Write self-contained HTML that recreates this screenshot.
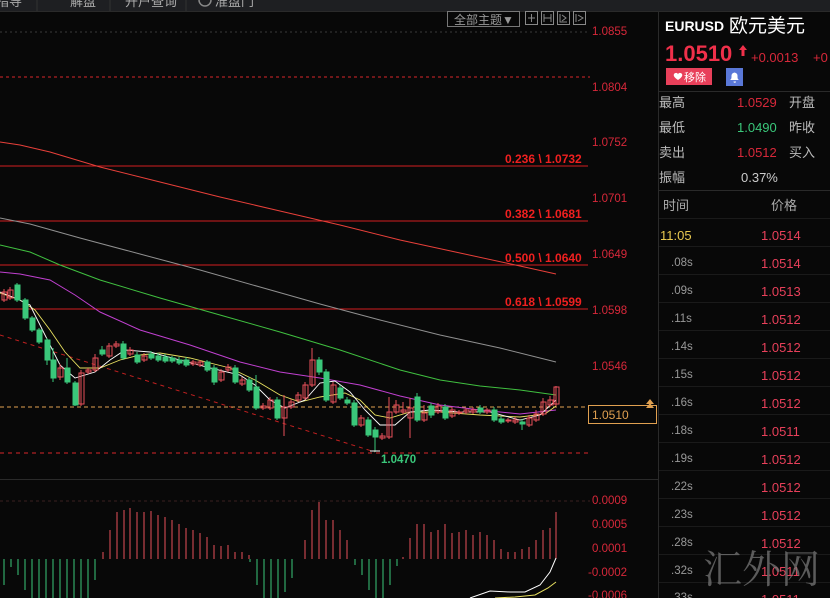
<!DOCTYPE html>
<html><head><meta charset="utf-8"><style>
body{margin:0;width:830px;height:598px;overflow:hidden;background:#080808;font-family:"Liberation Sans","Noto Sans CJK SC",sans-serif}
svg{position:absolute;left:0;top:0}
</style></head><body>
<svg width="830" height="598" xmlns="http://www.w3.org/2000/svg" font-family="Liberation Sans, Noto Sans CJK SC, sans-serif">
<rect width="830" height="598" fill="#080808"/>
<rect width="830" height="11" fill="#1e1f22"/>
<rect x="0" y="11" width="830" height="1" fill="#2a2a2a"/>
<g fill="#aaa" font-size="13"><text x="-4" y="6">指导</text><text x="70" y="6">解盘</text><text x="125" y="6">开户查询</text><text x="215" y="6">准盘门</text></g>
<g stroke="#333"><line x1="37" y1="0" x2="37" y2="11"/><line x1="110" y1="0" x2="110" y2="11"/><line x1="186" y1="0" x2="186" y2="11"/></g>
<circle cx="205" cy="0" r="6" fill="none" stroke="#888" stroke-width="1.5"/>
<line x1="0" y1="32" x2="590" y2="32" stroke="#3a3a3a" stroke-dasharray="2 3"/>
<line x1="0" y1="77" x2="590" y2="77" stroke="#d8262a" stroke-dasharray="3 3"/>
<g stroke="#d21e20"><line x1="0" y1="166" x2="588" y2="166"/><line x1="0" y1="221" x2="588" y2="221"/><line x1="0" y1="265" x2="588" y2="265"/><line x1="0" y1="309" x2="588" y2="309"/></g>
<g fill="#f02020" font-size="12" font-weight="bold"><text x="505" y="163">0.236 \ 1.0732</text><text x="505" y="218">0.382 \ 1.0681</text><text x="505" y="262">0.500 \ 1.0640</text><text x="505" y="306">0.618 \ 1.0599</text></g>
<line x1="0" y1="453" x2="590" y2="453" stroke="#d8262a" stroke-dasharray="4 4"/>
<line x1="0" y1="335" x2="375" y2="452" stroke="#c02020" stroke-dasharray="4 4"/>
<line x1="0" y1="407" x2="590" y2="407" stroke="#e0a050" stroke-dasharray="4 3"/>
<polyline fill="none" stroke="#e8403a" points="0,142 20,145 50,152 100,167 160,182 220,197 280,211 340,225 400,240 460,253 520,266 556,274"/>
<polyline fill="none" stroke="#909090" points="0,218 30,224 80,238 140,254 200,270 260,287 320,304 380,320 440,335 500,348 556,362"/>
<polyline fill="none" stroke="#40c040" points="0,245 30,252 60,265 100,280 160,298 220,315 280,332 340,350 400,370 440,380 480,386 520,390 556,395"/>
<polyline fill="none" stroke="#c040d0" points="0,272 20,274 50,280 75,295 100,312 140,330 190,345 240,362 280,372 320,378 360,385 400,396 440,405 480,410 520,414 556,410"/>
<polyline fill="none" stroke="#e8e060" stroke-width="0.9" points="0,293 20,300 35,310 50,330 65,352 80,368 100,368 120,360 140,355 160,353 190,358 230,368 255,380 280,395 300,402 320,397 345,393 360,400 375,415 390,418 410,412 440,412 480,415 520,417 545,414 556,406"/>
<polyline fill="none" stroke="#ffffff" stroke-width="0.9" points="0,292 15,298 30,305 45,335 60,365 75,378 95,372 110,360 125,350 150,352 180,360 210,368 240,375 255,385 270,400 285,408 305,400 320,383 335,381 350,392 365,410 380,425 395,425 410,412 430,410 460,412 490,412 520,420 540,415 556,400"/>
<g stroke-width="1">
<path stroke="#e8505a" fill="none" d="M4,289V302M2,292h5v8h-5z M10,287V300M8,290h5v8h-5z M60,364V380M58,368h5v9h-5z M81,370V406M79,373h5v31h-5z M88,368V374M86,370h5v2h-5z M95,354V372M93,358h5v12h-5z M109,343V358M107,346h5v10h-5z M116,341V348M114,344h5v2h-5z M130,347V356M128,350h5v4h-5z M144,353V362M142,356h5v4h-5z M193,360V366M191,362h5v2h-5z M200,360V367M198,362h5v3h-5z M221,369V382M219,372h5v8h-5z M228,364V372M226,367h5v3h-5z M242,377V386M240,380h5v4h-5z M263,403V410M261,406h5v2h-5z M270,397V410M268,400h5v8h-5z M284,395V436M282,407h5v11h-5z M291,399V409M289,402h5v5h-5z M298,392V402M296,395h5v5h-5z M305,382V400M303,385h5v13h-5z M312,348V387M310,360h5v25h-5z M333,382V404M331,385h5v17h-5z M361,415V427M359,418h5v7h-5z M382,433V440M380,436h5v2h-5z M389,397V439M387,412h5v25h-5z M396,400V414M394,405h5v7h-5z M403,402V414M401,410h5v2h-5z M410,398V438M408,408h5v10h-5z M424,405V422M422,413h5v7h-5z M438,403V414M436,406h5v6h-5z M452,407V418M450,410h5v6h-5z M459,410V415M457,412h5v1h-5z M466,408V414M464,410h5v2h-5z M473,407V414M471,410h5v2h-5z M487,408V414M485,410h5v2h-5z M508,418V423M506,420h5v1h-5z M515,417V424M513,420h5v2h-5z M529,415V427M527,418h5v7h-5z M536,410V422M534,414h5v6h-5z M543,398V416M541,402h5v12h-5z M550,396V407M548,400h5v5h-5z M556,386V406M554,387h5v17h-5z"/>
<path stroke="#3ac77a" fill="#3ac77a" d="M17,283V302M15,285h5v15h-5z M25,298V320M23,300h5v18h-5z M32,316V332M30,318h5v12h-5z M39,328V344M37,330h5v12h-5z M47,338V365M45,340h5v20h-5z M53,348V382M51,360h5v18h-5z M67,358V384M65,368h5v14h-5z M75,381V406M73,383h5v22h-5z M102,346V356M100,350h5v4h-5z M123,341V360M121,344h5v14h-5z M137,352V364M135,355h5v7h-5z M151,351V360M149,354h5v4h-5z M158,353V362M156,356h5v4h-5z M165,354V363M163,357h5v4h-5z M172,356V363M170,358h5v3h-5z M179,357V365M177,360h5v3h-5z M186,357V367M184,360h5v5h-5z M207,360V372M205,362h5v8h-5z M214,365V385M212,368h5v14h-5z M235,365V384M233,368h5v14h-5z M249,377V392M247,380h5v10h-5z M256,375V410M254,387h5v21h-5z M277,397V420M275,400h5v18h-5z M319,357V375M317,360h5v12h-5z M326,369V402M324,372h5v28h-5z M340,385V400M338,388h5v10h-5z M347,397V405M345,400h5v3h-5z M354,400V427M352,403h5v22h-5z M368,417V437M366,420h5v15h-5z M375,427V452M373,430h5v7h-5z M417,393V422M415,397h5v23h-5z M431,403V418M429,406h5v9h-5z M445,404V420M443,407h5v11h-5z M480,405V414M478,408h5v4h-5z M494,407V422M492,410h5v10h-5z M501,416V424M499,419h5v3h-5z M522,419V430M520,422h5v2h-5z"/>
</g>
<line x1="370" y1="451" x2="380" y2="451" stroke="#fff"/>
<text x="381" y="463" fill="#3ac77a" font-size="11.5" font-weight="bold">1.0470</text>
<g fill="#d8283a" font-size="11.5"><text x="592" y="35">1.0855</text><text x="592" y="91">1.0804</text><text x="592" y="146">1.0752</text><text x="592" y="202">1.0701</text><text x="592" y="258">1.0649</text><text x="592" y="314">1.0598</text><text x="592" y="370">1.0546</text>
<text x="592" y="504">0.0009</text><text x="592" y="528">0.0005</text><text x="592" y="552">0.0001</text><text x="588" y="576">-0.0002</text><text x="588" y="599">-0.0006</text></g>
<rect x="588.5" y="405.5" width="68" height="18" fill="#080808" stroke="#e0a050"/>
<text x="592" y="419" fill="#e0a050" font-size="12">1.0510</text>
<path d="M646,404l4,-5l4,5z M646,408l4,-5l4,5z" fill="#e0a050"/>
<rect x="447.5" y="11.5" width="72" height="15" fill="none" stroke="#777"/>
<text x="454" y="24" fill="#999" font-size="12">全部主题▼</text>
<g fill="none" stroke="#888"><rect x="525.5" y="11.5" width="12" height="13"/><rect x="541.5" y="11.5" width="12" height="13"/><rect x="557.5" y="11.5" width="12" height="13"/><rect x="573.5" y="11.5" width="12" height="13"/><path d="M528,18h7M531.5,14v8 M544,14v8M551,14v8M544,18h7 M560,14v8h7M562,15l4,3l-4,3 M576,14v8M578,15l5,3l-5,3"/></g>
<line x1="0" y1="479.5" x2="658" y2="479.5" stroke="#2a2a2a"/>
<line x1="0" y1="501" x2="590" y2="501" stroke="#3a2020" stroke-dasharray="3 3"/>
<line x1="658.5" y1="12" x2="658.5" y2="598" stroke="#2a2a2a"/>
<path stroke="#3ac77a" d="M4,559V585M11,559V567M18,559V575M25,559V590M32,559V598M39,559V598M46,559V598M53,559V598M60,559V598M67,559V598M74,559V598M81,559V598M88,559V598M95,559V580M250,559V562M257,559V585M264,559V598M271,559V598M278,559V598M285,559V592M292,559V578M355,559V565M362,559V575M369,559V590M376,559V598M383,559V598M390,559V585M397,559V566"/>
<path stroke="#e8505a" d="M103,559V552M110,559V530M117,559V512M124,559V510M130,559V508M137,559V512M144,559V512M151,559V511M158,559V515M165,559V517M172,559V520M179,559V524M186,559V528M193,559V530M200,559V533M207,559V537M214,559V545M221,559V546M228,559V545M235,559V552M242,559V552M249,559V555M305,559V540M312,559V510M319,559V502M326,559V520M333,559V520M340,559V530M347,559V540M403,559V557M410,559V538M417,559V524M424,559V524M431,559V532M438,559V530M445,559V524M452,559V533M459,559V532M466,559V530M473,559V535M480,559V532M487,559V535M494,559V540M501,559V549M508,559V552M515,559V552M522,559V549M529,559V547M536,559V540M543,559V530M550,559V528M556,559V512"/>
<polyline fill="none" stroke="#fff" points="470,598 490,591 510,592 525,592 540,585 550,572 556,558"/>
<polyline fill="none" stroke="#e8e060" points="495,598 515,597 535,595 548,588 556,582"/>
<text x="665" y="31" fill="#fff" font-size="14" font-weight="bold">EURUSD</text>
<text x="729" y="32" fill="#fff" font-size="19">欧元美元</text>
<text x="665" y="61" fill="#f0304a" font-size="22" font-weight="bold">1.0510</text>
<path d="M739,50l4,-5l4,5h-2.5v6h-3v-6z" fill="#f0304a"/>
<text x="751" y="62" fill="#d8283a" font-size="13">+0.0013</text>
<text x="813" y="62" fill="#d8283a" font-size="13">+0</text>
<rect x="666" y="68" width="46" height="17" fill="#e8405a"/>
<path d="M674,74c1.5,-2 4,-1 4,0.5c0,-1.5 2.5,-2.5 4,-0.5c1,2 -1,4 -4,6c-3,-2 -5,-4 -4,-6z" fill="#fff"/>
<text x="684" y="81" fill="#fff" font-size="11">移除</text>
<rect x="726" y="68" width="17" height="18" fill="#5a78d8"/>
<path d="M730,80h9c-1.5,-1 -1.5,-2 -1.5,-4c0,-2 -1,-3 -3,-3.5c-2,0.5 -3,1.5 -3,3.5c0,2 0,3 -1.5,4z M733.5,81.5h2.5a1.2,1.2 0 0 1 -2.5,0z" fill="#fff"/>
<line x1="659" y1="91.5" x2="830" y2="91.5" stroke="#2a2a2a"/>
<g font-size="13"><text x="659" y="107" fill="#bbb">最高</text><text x="737" y="107" fill="#d8283a">1.0529</text><text x="789" y="107" fill="#bbb">开盘</text>
<text x="659" y="132" fill="#bbb">最低</text><text x="737" y="132" fill="#3ac77a">1.0490</text><text x="789" y="132" fill="#bbb">昨收</text>
<text x="659" y="157" fill="#bbb">卖出</text><text x="737" y="157" fill="#d8283a">1.0512</text><text x="789" y="157" fill="#bbb">买入</text>
<text x="659" y="182" fill="#bbb">振幅</text><text x="741" y="182" fill="#ccc">0.37%</text>
<text x="663" y="210" fill="#aaa">时间</text><text x="771" y="210" fill="#aaa">价格</text></g>
<line x1="659" y1="190.5" x2="830" y2="190.5" stroke="#2a2a2a"/>
<g stroke="#1a1a1a"><line x1="659" y1="218.5" x2="830" y2="218.5"/><line x1="659" y1="246.5" x2="830" y2="246.5"/><line x1="659" y1="274.5" x2="830" y2="274.5"/><line x1="659" y1="302.5" x2="830" y2="302.5"/><line x1="659" y1="330.5" x2="830" y2="330.5"/><line x1="659" y1="358.5" x2="830" y2="358.5"/><line x1="659" y1="386.5" x2="830" y2="386.5"/><line x1="659" y1="414.5" x2="830" y2="414.5"/><line x1="659" y1="442.5" x2="830" y2="442.5"/><line x1="659" y1="470.5" x2="830" y2="470.5"/><line x1="659" y1="498.5" x2="830" y2="498.5"/><line x1="659" y1="526.5" x2="830" y2="526.5"/><line x1="659" y1="554.5" x2="830" y2="554.5"/><line x1="659" y1="582.5" x2="830" y2="582.5"/></g>
<text x="660" y="240" fill="#e8c850" font-size="13">11:05</text>
<g fill="#999" font-size="11.5"><text x="671" y="266">.08s</text><text x="671" y="294">.09s</text><text x="671" y="322">.11s</text><text x="671" y="350">.14s</text><text x="671" y="378">.15s</text><text x="671" y="406">.16s</text><text x="671" y="434">.18s</text><text x="671" y="462">.19s</text><text x="671" y="490">.22s</text><text x="671" y="518">.23s</text><text x="671" y="546">.28s</text><text x="671" y="574">.32s</text><text x="671" y="601">.33s</text></g>
<g fill="#e8405a" font-size="13"><text x="761" y="240">1.0514</text><text x="761" y="268">1.0514</text><text x="761" y="296">1.0513</text><text x="761" y="324">1.0512</text><text x="761" y="352">1.0512</text><text x="761" y="380">1.0512</text><text x="761" y="408">1.0512</text><text x="761" y="436">1.0511</text><text x="761" y="464">1.0512</text><text x="761" y="492">1.0512</text><text x="761" y="520">1.0512</text><text x="761" y="548">1.0512</text><text x="761" y="576">1.0511</text><text x="761" y="604">1.0511</text></g>
<text x="703" y="583" fill="#777" fill-opacity="0.75" font-size="39" font-family="Noto Serif CJK SC, serif">汇外网</text>
</svg>
</body></html>
